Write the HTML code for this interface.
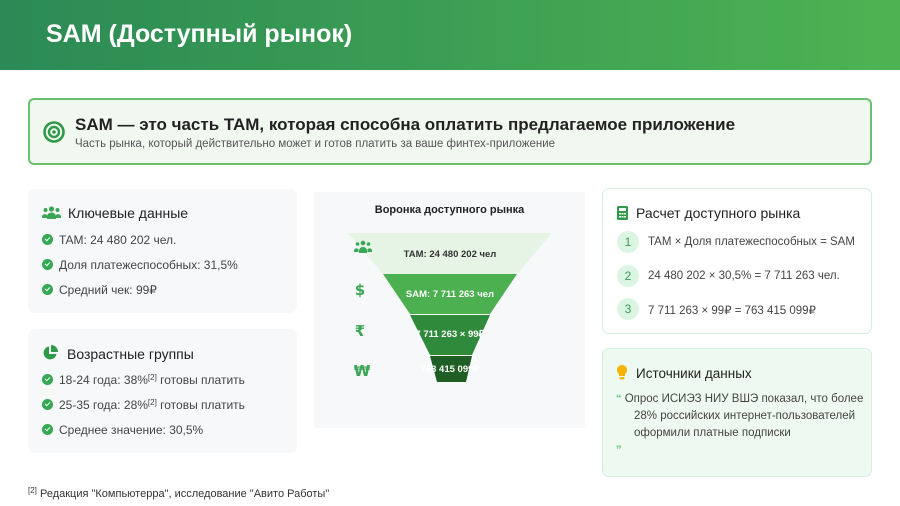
<!DOCTYPE html>
<html><head><meta charset="utf-8"><style>
*{margin:0;padding:0;box-sizing:border-box}
body{width:900px;height:506px;overflow:hidden;background:#fff;font-family:"Liberation Sans",sans-serif;color:#333;position:relative}
.hdr{position:absolute;left:0;top:0;width:900px;height:70px;background:linear-gradient(90deg,#2b8a55,#4db352)}
.hdr h1{position:absolute;left:46px;top:20px;color:#fff;font-size:25px;font-weight:bold}
.top{position:absolute;left:28px;top:98px;width:844px;height:67px;background:#f1f8f0;border:2px solid #6bbf6d;border-radius:6px}
.top .t{position:absolute;left:45px;top:15px;font-size:17px;font-weight:bold;color:#222}
.top .s{position:absolute;left:45px;top:38px;font-size:11.5px;color:#555}
.card{position:absolute;border-radius:7px}
.g{background:#f7f8fa}
.ct{position:absolute;font-size:14px;color:#222}
.li{position:absolute;left:14px;font-size:12px;color:#444;white-space:nowrap}
.ck{display:inline-block;width:11px;height:11px;border-radius:50%;background:#34a853;vertical-align:-1px;margin-right:6px;position:relative}
.ck:after{content:"";position:absolute;left:3px;top:2.5px;width:4px;height:2px;border-left:1.6px solid #fff;border-bottom:1.6px solid #fff;transform:rotate(-45deg)}
sup{font-size:8px;vertical-align:4px}
.num{position:absolute;left:14px;width:22px;height:22px;border-radius:50%;background:#dcf5e2;color:#3a9a57;font-size:12px;text-align:center;line-height:22px}
.rt{position:absolute;left:45px;font-size:11.5px;color:#444;white-space:nowrap}
.sl{position:absolute;font-size:11.5px;color:#444;white-space:nowrap}
</style></head><body>
<div class="hdr"><h1>SAM (Доступный рынок)</h1></div>
<div class="top">
<svg style="position:absolute;left:13px;top:21px" width="22" height="22" viewBox="0 0 22 22"><circle cx="11" cy="11" r="9.5" fill="none" stroke="#2e9a48" stroke-width="2.6"/><circle cx="11" cy="11" r="5" fill="none" stroke="#2e9a48" stroke-width="2.4"/><circle cx="11" cy="11" r="1.8" fill="#2e9a48"/></svg>
<div class="t">SAM — это часть TAM, которая способна оплатить предлагаемое приложение</div>
<div class="s">Часть рынка, который действительно может и готов платить за ваше финтех-приложение</div>
</div>

<div class="card g" style="left:28px;top:189px;width:269px;height:124px">
<svg style="position:absolute;left:14px;top:17px" width="19" height="13" viewBox="0 0 19 13"><circle cx="9.5" cy="3" r="2.6" fill="#3aa656"/><circle cx="3.5" cy="4" r="2" fill="#3aa656"/><circle cx="15.5" cy="4" r="2" fill="#3aa656"/><path d="M5 13v-2.5a4.5 4 0 0 1 9 0V13z M0 12v-1.5a3 3 0 0 1 5-1.5V12z M19 12v-1.5a3 3 0 0 0-5-1.5V12z" fill="#3aa656"/></svg>
<div class="ct" style="left:40px;top:16px">Ключевые данные</div>
<div class="li" style="top:44px"><span class="ck"></span>TAM: 24 480 202 чел.</div>
<div class="li" style="top:69px"><span class="ck"></span>Доля платежеспособных: 31,5%</div>
<div class="li" style="top:94px"><span class="ck"></span>Средний чек: 99₽</div>
</div>

<div class="card g" style="left:28px;top:329px;width:269px;height:124px">
<svg style="position:absolute;left:14px;top:16px" width="16" height="16" viewBox="0 0 16 16"><path d="M7 1.5A6.5 6.5 0 1 0 14.5 9H7z" fill="#2e9a48"/><path d="M9 0v7h7A7 7 0 0 0 9 0z" fill="#2e9a48"/></svg>
<div class="ct" style="left:39px;top:17px">Возрастные группы</div>
<div class="li" style="top:44px"><span class="ck"></span>18-24 года: 38%<sup>[2]</sup> готовы платить</div>
<div class="li" style="top:69px"><span class="ck"></span>25-35 года: 28%<sup>[2]</sup> готовы платить</div>
<div class="li" style="top:94px"><span class="ck"></span>Среднее значение: 30,5%</div>
</div>

<div class="card g" style="left:314px;top:192px;width:271px;height:236px;border-radius:3px"></div>
<div style="position:absolute;left:314px;top:204px;width:271px;text-align:center;font-size:11px;font-weight:bold;color:#222">Воронка доступного рынка</div>
<svg style="position:absolute;left:0;top:0" width="900" height="506">
<polygon points="348,233 552,233 517,274 383,274" fill="#e6f4e6"/>
<polygon points="383,274 517,274 490,314 410,314" fill="#4caf50"/>
<polygon points="410,315 490,315 472,355 430,355" fill="#2f8a3b"/>
<polygon points="430,356 472,356 466,382 437,382" fill="#1f5e24"/>
<g font-family="Liberation Sans,sans-serif" font-size="9.5" font-weight="bold" text-anchor="middle">
<text x="450" y="257" fill="#333">TAM: 24 480 202 чел</text>
<text x="450" y="297" fill="#fff">SAM: 7 711 263 чел</text>
<text x="450" y="337" fill="#fff">7 711 263 × 99₽</text>
<text x="450" y="372" fill="#fff">763 415 099₽</text>
</g>
<g fill="#3aa656"><circle cx="363" cy="243" r="2.3"/><circle cx="357.5" cy="244" r="1.8"/><circle cx="368.5" cy="244" r="1.8"/><path d="M359 253v-2.5a4 3.5 0 0 1 8 0V253z M354 252v-1.5a2.6 2.6 0 0 1 4.5-1.3V252z M372 252v-1.5a2.6 2.6 0 0 0-4.5-1.3V252z"/></g>
<g font-family="DejaVu Sans,sans-serif" font-size="15" font-weight="bold" fill="#3aa656" text-anchor="middle"><text x="360" y="295">$</text><text x="360" y="336">₹</text><text x="362" y="376">₩</text></g>
</svg>

<div class="card" style="left:602px;top:188px;width:270px;height:146px;background:#fff;border:1px solid #d6eedd">
<svg style="position:absolute;left:14px;top:17px" width="11" height="14" viewBox="0 0 11 14"><rect width="11" height="14" rx="1.5" fill="#2e9a48"/><rect x="2" y="2" width="7" height="3" fill="#fff"/><g fill="#fff"><rect x="2" y="7" width="2" height="1.5"/><rect x="4.5" y="7" width="2" height="1.5"/><rect x="7" y="7" width="2" height="1.5"/><rect x="2" y="10" width="2" height="1.5"/><rect x="4.5" y="10" width="2" height="1.5"/><rect x="7" y="10" width="2" height="1.5"/></g></svg>
<div class="ct" style="left:33px;top:16px">Расчет доступного рынка</div>
<div class="num" style="top:42px">1</div><div class="rt" style="top:47px">TAM × Доля платежеспособных = SAM</div>
<div class="num" style="top:76px">2</div><div class="rt" style="top:81px">24 480 202 × 30,5% = 7 711 263 чел.</div>
<div class="num" style="top:109px">3</div><div class="rt" style="top:114px">7 711 263 × 99₽ = 763 415 099₽</div>
</div>

<div class="card" style="left:602px;top:348px;width:270px;height:129px;background:#eefaf1;border:1px solid #d6eedd">
<svg style="position:absolute;left:14px;top:16px" width="10" height="15" viewBox="0 0 10 15"><path d="M5 0a5 5 0 0 0-3 9v2h6V9a5 5 0 0 0-3-9z" fill="#f4b400"/><rect x="2.5" y="12" width="5" height="2.5" rx="1" fill="#f4b400"/></svg>
<div class="ct" style="left:33px;top:17px;font-size:13.5px">Источники данных</div>
<div class="sl" style="left:13px;top:44px"><span style="color:#5cbf6e;font-weight:bold;font-size:11px">“</span> Опрос ИСИЭЗ НИУ ВШЭ показал, что более</div>
<div class="sl" style="left:31px;top:61px">28% российских интернет-пользователей</div>
<div class="sl" style="left:31px;top:78px">оформили платные подписки</div>
<div class="sl" style="left:13px;top:95px;color:#5cbf6e;font-weight:bold;font-size:11px">”</div>
</div>

<div style="position:absolute;left:28px;top:486px;font-size:11px;color:#333"><sup>[2]</sup> Редакция "Компьютерра", исследование "Авито Работы"</div>
</body></html>
